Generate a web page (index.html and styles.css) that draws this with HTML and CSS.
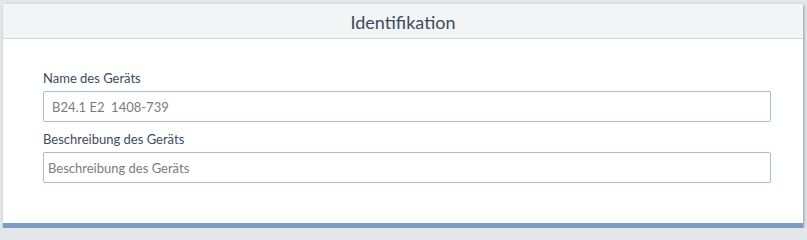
FILE: index.html
```html
<!DOCTYPE html>
<html lang="de">
<head>
<meta charset="utf-8">
<title>Identifikation</title>
<link rel="stylesheet" href="styles.css">
</head>
<body>
<div class="page">
  <section class="card">
    <header class="card-header"><h2 class="card-title">Identifikation</h2></header>
    <div class="card-body">
      <div class="field">
        <label class="field-label" for="name">Name des Geräts</label>
        <input class="field-input field-input-wide" id="name" type="text" value="B24.1 E2  1408-739" readonly>
      </div>
      <div class="field">
        <label class="field-label" for="desc">Beschreibung des Geräts</label>
        <input class="field-input" id="desc" type="text" placeholder="Beschreibung des Geräts">
      </div>
    </div>
    <div class="card-footer"></div>
  </section>
</div>
</body>
</html>
```

FILE: styles.css
```css
html, body {
  margin: 0;
  padding: 0;
  background: #e4e7ea;
  font-family: Lato, "Open Sans", "Liberation Sans", sans-serif;
}
.page {
  padding: 4px 4px 0 3px;
  width: 800px;
}
.card {
  background: #ffffff;
  box-shadow: 1px 1px 3px rgba(0, 0, 0, 0.35);
  display: flex;
  flex-direction: column;
}
.card-header {
  height: 34px;
  background: #f3f4f6;
  border-bottom: 1px solid #cfd5db;
  display: flex;
  align-items: center;
  justify-content: center;
}
.card-title {
  margin: 0;
  font-weight: 400;
  font-size: 18px;
  color: #3d4b5c;
  line-height: 22px;
  padding-top: 1px;
}
.card-body {
  padding: 30px 32px 40px 40px;
  display: flex;
  flex-direction: column;
  gap: 8px;
}
.field {
  display: flex;
  flex-direction: column;
}
.field-label {
  font-size: 13px;
  line-height: 18px;
  color: #3d4b5c;
  margin-bottom: 4px;
}
.field-input {
  box-sizing: border-box;
  height: 31px;
  width: 100%;
  margin: 0;
  border: 1px solid #a7bdd4;
  border-radius: 2px;
  padding: 0 4px;
  font-family: inherit;
  font-size: 13px;
  color: #7b7b7b;
  background: #ffffff;
  outline: none;
}
.field-input-wide {
  padding: 0 8px;
}
.field-input::placeholder {
  color: #7b7b7b;
  opacity: 1;
}
.card-footer {
  height: 5px;
  background: #7a9cc3;
}
```
